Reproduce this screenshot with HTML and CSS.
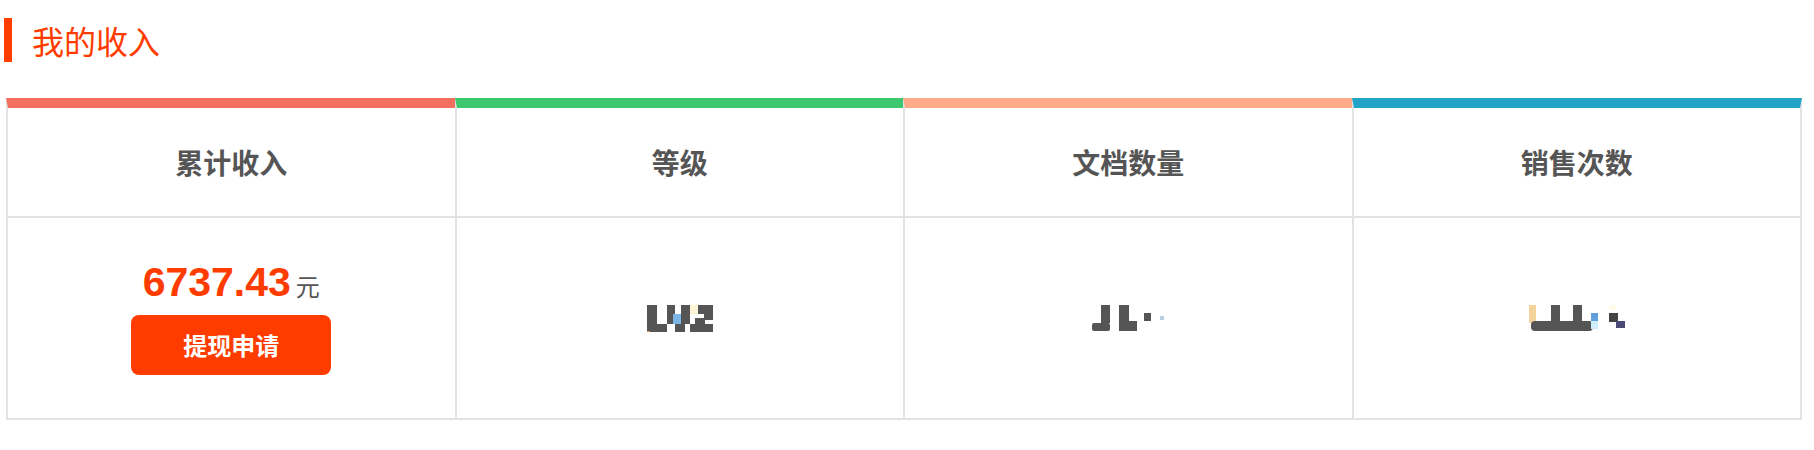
FILE: index.html
```html
<!DOCTYPE html>
<html lang="zh-CN">
<head>
<meta charset="utf-8">
<title>我的收入</title>
<link rel="stylesheet" href="styles.css">
</head>
<body>
<div class="page">
  <h2 class="title">我的收入</h2>
  <div class="stats">
    <div class="col col-red">
      <div class="head">累计收入</div>
      <div class="body">
        <div class="amount"><span class="num">6737.43</span><span class="unit">元</span></div>
        <button class="btn">提现申请</button>
      </div>
    </div>
    <div class="col col-green">
      <div class="head">等级</div>
      <div class="body">
        <svg class="mosaic" width="66" height="27" viewBox="0 0 66 27" aria-label="LV2">
          <rect x="0" y="0" width="10" height="27" fill="#555"/>
          <rect x="0" y="19" width="20" height="8" fill="#555"/>
          <rect x="20" y="0" width="8" height="19" fill="#555"/>
          <rect x="26" y="9" width="8" height="10" fill="#7cb6e6"/>
          <rect x="28" y="19" width="10" height="8" fill="#555"/>
          <rect x="34" y="0" width="9" height="19" fill="#555"/>
          <rect x="43" y="0" width="8" height="9" fill="#fdf4d6"/>
          <rect x="51" y="0" width="15" height="9" fill="#555"/>
          <rect x="57" y="9" width="9" height="6" fill="#555"/>
          <rect x="48" y="13" width="10" height="6" fill="#555"/>
          <rect x="43" y="19" width="23" height="8" fill="#555"/>
          <rect x="0" y="26" width="3" height="1" fill="#e8904a"/>
        </svg>
      </div>
    </div>
    <div class="col col-peach">
      <div class="head">文档数量</div>
      <div class="body">
        <svg class="mosaic" width="72" height="26" viewBox="0 0 72 26">
          <rect x="9" y="0" width="9" height="18" fill="#555"/>
          <rect x="0" y="18" width="18" height="8" rx="2" fill="#555"/>
          <rect x="27" y="0" width="10" height="26" fill="#555"/>
          <rect x="27" y="16" width="18" height="10" fill="#555"/>
          <rect x="52" y="8" width="7" height="8" fill="#555"/>
          <rect x="68" y="11" width="4" height="4" fill="#b8cde0"/>
        </svg>
      </div>
    </div>
    <div class="col col-blue">
      <div class="head">销售次数</div>
      <div class="body">
        <svg class="mosaic" width="96" height="26" viewBox="0 0 96 26">
          <rect x="0" y="0" width="7" height="18" fill="#f3d29c"/>
          <rect x="2" y="16" width="62" height="10" rx="4" fill="#555"/>
          <rect x="22" y="0" width="9" height="16" fill="#555"/>
          <rect x="44" y="0" width="9" height="16" fill="#555"/>
          <rect x="62" y="8" width="7" height="8" fill="#5fa0dc"/>
          <rect x="62" y="16" width="7" height="8" fill="#cdeefa"/>
          <rect x="80" y="0" width="7" height="5" fill="#fffbe8"/>
          <rect x="80" y="8" width="9" height="9" fill="#444"/>
          <rect x="87" y="16" width="9" height="7" fill="#4a4a78"/>
        </svg>
      </div>
    </div>
  </div>
</div>
</body>
</html>
```
FILE: styles.css
```css
* { box-sizing: border-box; }

html, body {
  margin: 0;
  padding: 0;
  background: #fff;
}

body {
  font-family: "Noto Sans CJK SC", "Liberation Sans", sans-serif;
  color: #555;
}

.page {
  padding: 18px 12px 30px 4px;
}

.title {
  margin: 0;
  height: 44px;
  line-height: 44px;
  border-left: 8px solid #ff3c00;
  padding-left: 20px;
  font-size: 32px;
  font-weight: normal;
  color: #ff3c00;
}

.stats {
  margin: 36px 0 0 2px;
  display: grid;
  grid-template-columns: repeat(4, 1fr);
  border-right: 2px solid #e3e3e3;
  border-bottom: 2px solid #e3e3e3;
}

.col {
  display: flex;
  flex-direction: column;
}

.head {
  height: 120px;
  border-top: 10px solid #f37060;
  border-left: 2px solid #e3e3e3;
  border-bottom: 2px solid #e3e3e3;
  display: flex;
  align-items: center;
  justify-content: center;
  font-size: 28px;
  font-weight: bold;
  color: #555;
}

.col:last-child .head {
  margin-right: -2px;
  border-right: 2px solid #e3e3e3;
}

.col-green .head { border-top-color: #3dc86f; }
.col-peach .head { border-top-color: #ffaa88; }
.col-blue .head { border-top-color: #22a4c9; }

.body {
  height: 200px;
  border-left: 2px solid #e3e3e3;
  display: flex;
  flex-direction: column;
  align-items: center;
  justify-content: center;
}

.amount {
  height: 40px;
  line-height: 40px;
  margin-bottom: 13px;
  white-space: nowrap;
}

.num {
  font-family: "Liberation Sans", sans-serif;
  font-size: 41px;
  font-weight: bold;
  color: #ff3c00;
}

.unit {
  font-size: 24px;
  margin-left: 5px;
  color: #555;
}

.btn {
  width: 200px;
  height: 60px;
  border: none;
  border-radius: 8px;
  background: #ff3c00;
  color: #fff;
  font-family: "Noto Sans CJK SC", sans-serif;
  font-size: 24px;
  font-weight: bold;
  padding: 0;
  cursor: pointer;
}

.mosaic {
  display: block;
}
```
